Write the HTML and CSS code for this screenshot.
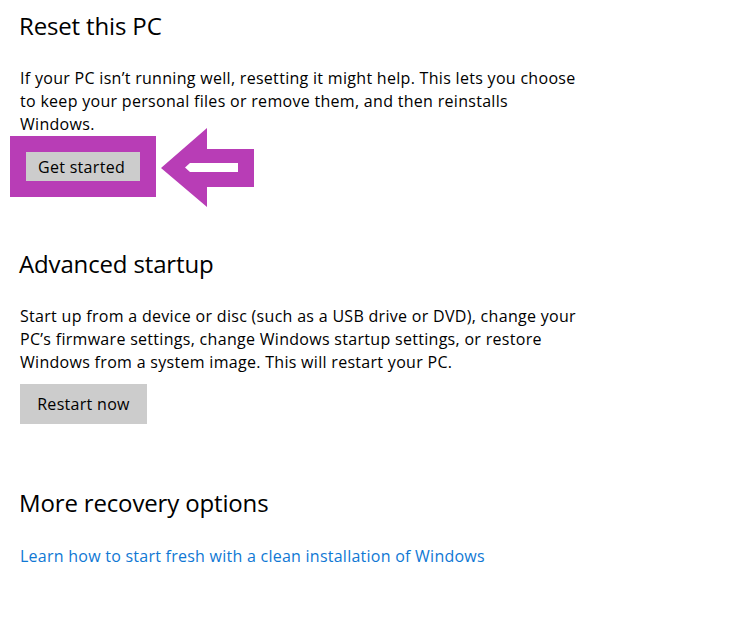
FILE: index.html
```html
<!DOCTYPE html>
<html lang="en">
<head>
<meta charset="utf-8">
<title>Recovery</title>
<link rel="stylesheet" href="styles.css">
</head>
<body>
<main class="page">
  <section class="section">
    <h2 class="title">Reset this PC</h2>
    <p class="desc">If your PC isn’t running well, resetting it might help. This lets you choose to keep your personal files or remove them, and then reinstalls Windows.</p>
    <div class="callout-row">
      <div class="highlight">
        <button class="btn btn-small" type="button">Get started</button>
      </div>
      <svg class="arrow" width="94" height="80" viewBox="0 0 94 80" aria-hidden="true">
        <polygon points="1,41 47,1 47,22 94,22 94,60 47,60 47,80" fill="#b83db6"/>
        <polygon points="25,40.5 30,36 78,36 78,45 30,45" fill="#ffffff"/>
      </svg>
    </div>
  </section>

  <section class="section section-adv">
    <h2 class="title">Advanced startup</h2>
    <p class="desc desc-adv">Start up from a device or disc (such as a USB drive or DVD), change your PC’s firmware settings, change Windows startup settings, or restore Windows from a system image. This will restart your PC.</p>
    <button class="btn btn-large" type="button">Restart now</button>
  </section>

  <section class="section section-more">
    <h2 class="title">More recovery options</h2>
    <a class="link" href="#">Learn how to start fresh with a clean installation of Windows</a>
  </section>
</main>
</body>
</html>
```

FILE: styles.css
```css
html, body {
  margin: 0;
  padding: 0;
  background: #ffffff;
}

body {
  font-family: "Open Sans", "Noto Sans", sans-serif;
  color: #000000;
}

.page {
  padding: 10px 20px 0 20px;
  width: 565px;
}

.section {
  display: flex;
  flex-direction: column;
  align-items: flex-start;
}

.title {
  margin: 0;
  font-size: 24px;
  font-weight: 400;
  line-height: 32px;
  letter-spacing: -0.15px;
  margin-left: -1px;
  white-space: nowrap;
}

.desc {
  margin: 25px 0 0 0;
  font-size: 16px;
  line-height: 23px;
  letter-spacing: 0.3px;
}

.desc-adv {
  margin-top: 25px;
}

.callout-row {
  display: flex;
  align-items: center;
  gap: 4px;
  margin-left: -10px;
  margin-top: 0;
}

.highlight {
  background: #b83db6;
  padding: 16px;
}

.arrow {
  display: block;
  margin: -10px 0;
}

.btn {
  font-family: inherit;
  font-size: 16px;
  letter-spacing: 0.3px;
  color: #000000;
  background: #cccccc;
  border: none;
  border-radius: 0;
  margin: 0;
  display: block;
}

.btn-small {
  width: 114px;
  height: 29px;
  padding: 0 0 0 12px;
  text-align: left;
}

.btn-large {
  width: 127px;
  height: 40px;
  padding: 0;
  margin-top: 10px;
}

.section-adv {
  margin-top: 51px;
}

.section-more {
  margin-top: 63px;
}

.link {
  margin-top: 26px;
  font-size: 16px;
  line-height: 23px;
  letter-spacing: 0.25px;
  color: #0f78d4;
  text-decoration: none;
  white-space: nowrap;
}
```
